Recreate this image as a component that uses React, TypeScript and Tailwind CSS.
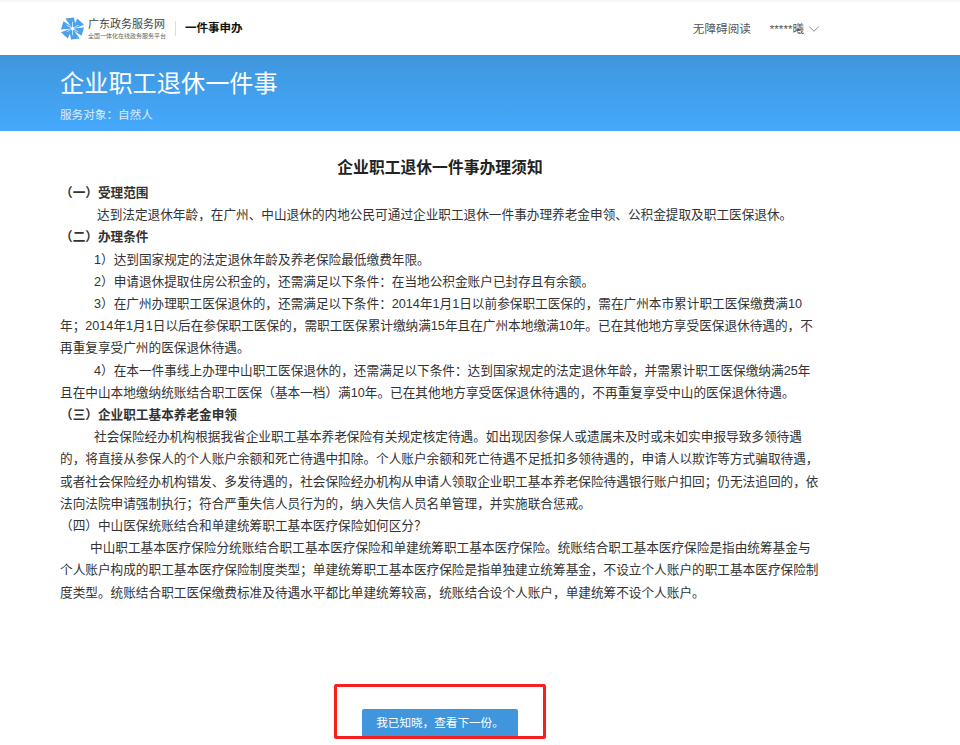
import { ChevronDown } from 'lucide-react';

const font = "font-['Liberation_Sans','Noto_Sans_CJK_SC',sans-serif]";

function Logo() {
  return (
    <svg width="23" height="23" viewBox="0 0 24 24" className="shrink-0">
      <g fill="#4aa2ee">
        <path d="M12 12 L4.5 1.5 L13.5 0.5 L15 8 Z" />
        <path d="M12 12 L17 1.5 L24 8 L16.5 11 Z" />
        <path d="M12 12 L24 11 L21.5 19.5 L15 15.5 Z" />
        <path d="M12 12 L19.5 22.5 L10.5 23.5 L9 16 Z" />
        <path d="M12 12 L7 22.5 L0 16 L7.5 13 Z" />
        <path d="M12 12 L0 13 L2.5 4.5 L9 8.5 Z" />
      </g>
      <g stroke="#ffffff" strokeWidth="0.7">
        <line x1="12" y1="5" x2="12" y2="19" />
        <line x1="6" y1="8.5" x2="18" y2="15.5" />
        <line x1="18" y1="8.5" x2="6" y2="15.5" />
      </g>
      <circle cx="12" cy="12" r="1.6" fill="#ffffff" />
    </svg>
  );
}

function Header() {
  return (
    <header className="h-[55px] bg-white border-t-2 border-[#f5f5f5] flex items-center justify-between pl-[61px] pr-[137px]">
      <div className="flex items-center">
        <Logo />
        <div className="ml-[4px] flex flex-col">
          <span className="text-[11px] leading-[13px] text-[#444]">广东政务服务网</span>
          <span className="text-[6px] leading-[8px] mt-[1px] text-[#666]">全国一体化在线政务服务平台</span>
        </div>
        <div className="w-px h-[15px] bg-[#ddd] mx-[9px]" />
        <span className="text-[11.5px] font-bold text-[#111]">一件事申办</span>
      </div>
      <div className="flex items-center text-[11.6px] text-[#555]">
        <span>无障碍阅读</span>
        <span className="ml-[19px]">*****曦</span>
        <ChevronDown size={18} strokeWidth={0.9} className="ml-[1px] text-[#555]" />
      </div>
    </header>
  );
}

function Banner() {
  return (
    <div className="h-[76px] bg-gradient-to-b from-[#3f96dd] to-[#45a9fc] pl-[60px] pt-[11px] text-white">
      <h1 className="text-[24.2px] leading-[36px]">企业职工退休一件事</h1>
      <p className="mt-[4px] text-[11.6px] leading-[18px] text-white/80">服务对象：自然人</p>
    </div>
  );
}

function Notice() {
  return (
    <main className="pl-[60px] text-[12.65px] leading-[22.2px] text-[#333]">
      <h2 className="pt-[26px] w-[760px] text-center text-[15.8px] leading-[22px] font-bold text-[#222]">企业职工退休一件事办理须知</h2>
      <div className="mt-[3px]">
        <p className="font-bold">（一）受理范围</p>
        <p className="pl-[37px]">达到法定退休年龄，在广州、中山退休的内地公民可通过企业职工退休一件事办理养老金申领、公积金提取及职工医保退休。</p>
        <p className="font-bold">（二）办理条件</p>
        <p className="pl-[34px]">1）达到国家规定的法定退休年龄及养老保险最低缴费年限。</p>
        <p className="pl-[34px]">2）申请退休提取住房公积金的，还需满足以下条件：在当地公积金账户已封存且有余额。</p>
        <p className="pl-[34px]">3）在广州办理职工医保退休的，还需满足以下条件：2014年1月1日以前参保职工医保的，需在广州本市累计职工医保缴费满10</p>
        <p>年；2014年1月1日以后在参保职工医保的，需职工医保累计缴纳满15年且在广州本地缴满10年。已在其他地方享受医保退休待遇的，不</p>
        <p>再重复享受广州的医保退休待遇。</p>
        <p className="pl-[34px]">4）在本一件事线上办理中山职工医保退休的，还需满足以下条件：达到国家规定的法定退休年龄，并需累计职工医保缴纳满25年</p>
        <p>且在中山本地缴纳统账结合职工医保（基本一档）满10年。已在其他地方享受医保退休待遇的，不再重复享受中山的医保退休待遇。</p>
        <p className="font-bold">（三）企业职工基本养老金申领</p>
        <p className="pl-[34px]">社会保险经办机构根据我省企业职工基本养老保险有关规定核定待遇。如出现因参保人或遗属未及时或未如实申报导致多领待遇</p>
        <p>的，将直接从参保人的个人账户余额和死亡待遇中扣除。个人账户余额和死亡待遇不足抵扣多领待遇的，申请人以欺诈等方式骗取待遇，</p>
        <p>或者社会保险经办机构错发、多发待遇的，社会保险经办机构从申请人领取企业职工基本养老保险待遇银行账户扣回；仍无法追回的，依</p>
        <p>法向法院申请强制执行；符合严重失信人员行为的，纳入失信人员名单管理，并实施联合惩戒。</p>
        <p>（四）中山医保统账结合和单建统筹职工基本医疗保险如何区分？</p>
        <p className="pl-[30px]">中山职工基本医疗保险分统账结合职工基本医疗保险和单建统筹职工基本医疗保险。统账结合职工基本医疗保险是指由统筹基金与</p>
        <p>个人账户构成的职工基本医疗保险制度类型；单建统筹职工基本医疗保险是指单独建立统筹基金，不设立个人账户的职工基本医疗保险制</p>
        <p>度类型。统账结合职工医保缴费标准及待遇水平都比单建统筹较高，统账结合设个人账户，单建统筹不设个人账户。</p>
      </div>
    </main>
  );
}

export default function App() {
  return (
    <div className={`relative w-[960px] h-[745px] overflow-hidden bg-white ${font}`}>
      <Header />
      <Banner />
      <Notice />
      <div className="mt-[105px] w-[880px] flex justify-center">
        <button className="w-[156px] h-[28px] bg-[#3f96dd] rounded-t-[2px] text-[11.6px] text-white">我已知晓，查看下一份。</button>
      </div>
      {/* red annotation over the button */}
      <div className="absolute left-[334px] top-[684px] w-[212px] h-[55px] border-[3px] border-[#f5201f] rounded-[2px]" />
    </div>
  );
}
